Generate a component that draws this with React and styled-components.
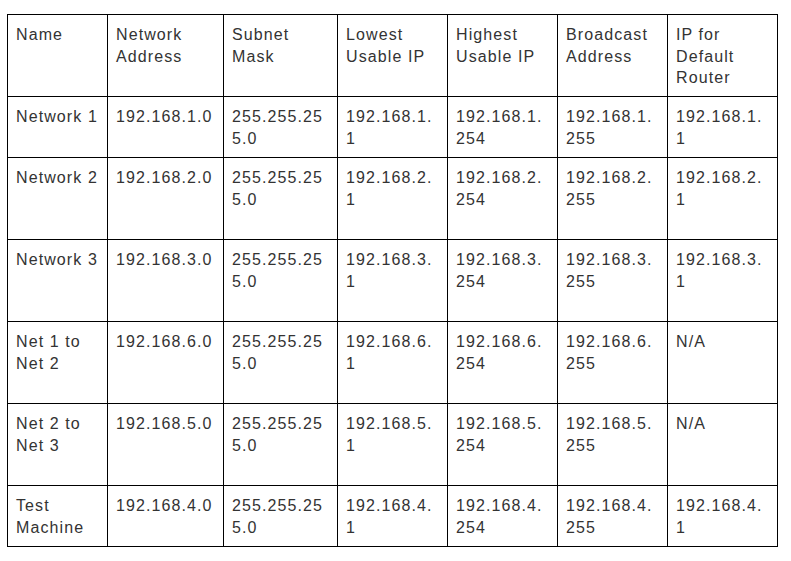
import React from "react";
import styled, { createGlobalStyle } from "styled-components";

const GlobalStyle = createGlobalStyle`
  html, body {
    margin: 0;
    padding: 0;
    background: #ffffff;
  }
  body {
    font-family: "Liberation Sans", Arial, sans-serif;
  }
`;

const Page = styled.div`
  padding: 14px 0 0 7px;
`;

const Table = styled.table`
  border-collapse: collapse;
  table-layout: fixed;
  width: 771px;
  font-family: "Liberation Sans", Arial, sans-serif;
  font-size: 16px;
  line-height: 21.7px;
  letter-spacing: 1.1px;
  color: #333333;
`;

const Col = styled.col`
  width: ${(p) => p.$w}px;
`;

const Row = styled.tr`
  height: ${(p) => (p.$short ? 61 : 82)}px;
`;

const Cell = styled.td`
  border: 1px solid #000000;
  padding: 9px 8.75px 4px 8px;
  vertical-align: top;
  text-align: left;
  font-weight: normal;
  overflow-wrap: anywhere;
  word-break: ${(p) => (p.$breakAll ? "break-all" : "normal")};
`;

const HeadCell = styled(Cell).attrs({ as: "th" })``;

const widths = [100, 116, 114, 110, 110, 110, 110];

const headers = [
  "Name",
  "Network Address",
  "Subnet Mask",
  "Lowest Usable IP",
  "Highest Usable IP",
  "Broadcast Address",
  "IP for Default Router",
];

const rows = [
  { name: "Network 1", net: 1, router: "192.168.1.1", short: true },
  { name: "Network 2", net: 2, router: "192.168.2.1" },
  { name: "Network 3", net: 3, router: "192.168.3.1" },
  { name: "Net 1 to Net 2", net: 6, router: "N/A" },
  { name: "Net 2 to Net 3", net: 5, router: "N/A" },
  { name: "Test Machine", net: 4, router: "192.168.4.1", short: true },
];

export default function App() {
  return (
    <>
      <GlobalStyle />
      <Page>
        <Table>
          <colgroup>
            {widths.map((w, i) => (
              <Col key={i} $w={w} />
            ))}
          </colgroup>
          <thead>
            <Row>
              {headers.map((h) => (
                <HeadCell key={h}>{h}</HeadCell>
              ))}
            </Row>
          </thead>
          <tbody>
            {rows.map((r) => (
              <Row key={r.name} $short={r.short}>
                <Cell>{r.name}</Cell>
                <Cell $breakAll>{`192.168.${r.net}.0`}</Cell>
                <Cell $breakAll>255.255.255.0</Cell>
                <Cell $breakAll>{`192.168.${r.net}.1`}</Cell>
                <Cell $breakAll>{`192.168.${r.net}.254`}</Cell>
                <Cell $breakAll>{`192.168.${r.net}.255`}</Cell>
                <Cell $breakAll>{r.router}</Cell>
              </Row>
            ))}
          </tbody>
        </Table>
      </Page>
    </>
  );
}
